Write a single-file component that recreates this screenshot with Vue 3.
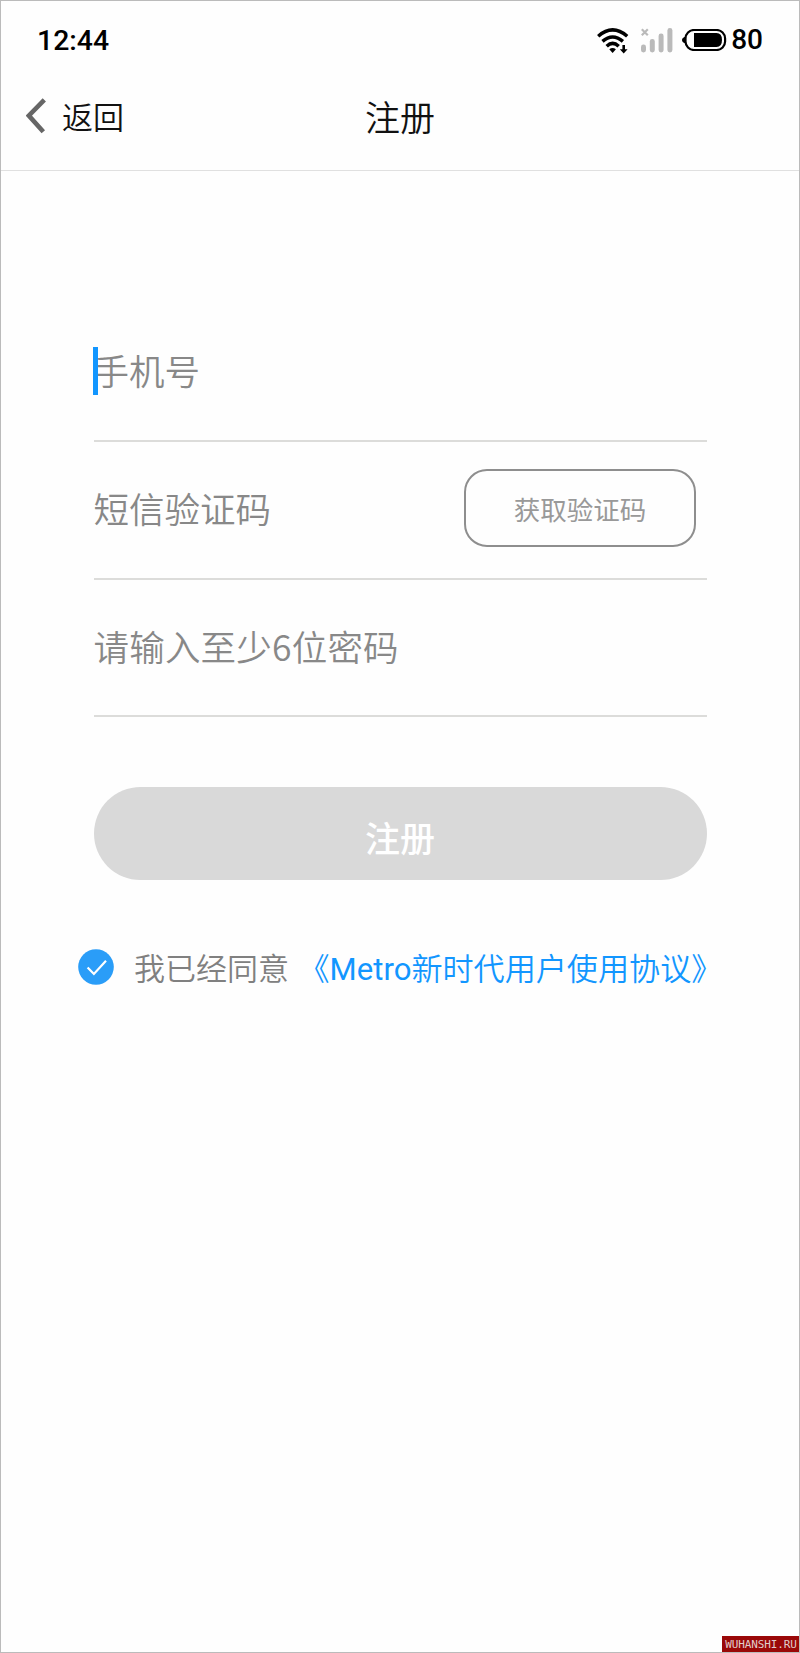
<script setup>
import { reactive, ref } from 'vue'
const form = reactive({
    phone: '',
    code: '',
    password: ''
})
const agreed = ref(true)
const bars = [
    { x: 0, h: 8 },
    { x: 8.8, h: 13.5 },
    { x: 17.6, h: 19 },
    { x: 26.4, h: 24.5 }
]
</script>
<template>
    <div class="page">
        <div class="status">
            <span class="time">12:44</span>
            <div class="status-icons">
                <svg class="wifi" width="32" height="27" viewBox="0 0 32 27">
                    <g fill="none" stroke="#000" stroke-width="3.5">
                        <path d="M1.2 9.2Q15.6-3.4 30.2 9.2" />
                        <path d="M5.5 14.4Q15.6 5.6 25.9 14.4" />
                        <path d="M9.7 19.2Q15.6 13.6 21.7 19.2" />
                    </g>
                    <path d="M12.3 22.3Q15.6 19.6 18.9 22.3L15.6 26Z" />
                    <path d="M25.4 18h2.6v4.2h2.6L26.7 26.4 22.8 22.2h2.6Z" />
                </svg>
                <svg class="signal" width="32" height="25" viewBox="0 0 32 25">
                    <rect v-for="bar in bars" :key="bar.x" :x="bar.x" :y="24.5 - bar.h" width="5" :height="bar.h" rx="2.4" fill="#bababa" />
                    <path d="M.8 1.2 6.8 7.2M6.8 1.2.8 7.2" stroke="#bababa" stroke-width="2.2" />
                </svg>
                <svg class="battery" width="45" height="22" viewBox="0 0 45 22">
                    <path d="M4 7.5Q0 8.5 0 11T4 14.5Z" />
                    <rect x="3.5" y="1" width="39.6" height="20" rx="8.5" fill="none" stroke="#000" stroke-width="2.2" />
                    <path d="M12 4H34.5Q40 4 40 11T34.5 18H12Z" />
                </svg>
                <span class="percent">80</span>
            </div>
        </div>
        <header class="nav">
            <div class="back">
                <svg width="20" height="36" viewBox="0 0 20 36">
                    <path d="M18.3 1.8 2.8 17.6 17.3 33.8" fill="none" stroke="#666" stroke-width="4.6" />
                </svg>
                <span>返回</span>
            </div>
            <h1>注册</h1>
            <div class="nav-right"></div>
        </header>
        <main class="content">
            <div class="field">
                <i class="caret"></i>
                <input v-model="form.phone" type="text" placeholder="手机号">
            </div>
            <div class="field">
                <input v-model="form.code" type="text" placeholder="短信验证码">
                <button class="get-code">获取验证码</button>
            </div>
            <div class="field">
                <input v-model="form.password" class="password" type="password" placeholder="请输入至少6位密码">
            </div>
            <button class="submit">注册</button>
            <div class="agree" @click="agreed = !agreed">
                <svg width="36" height="36" viewBox="0 0 36 36">
                    <circle cx="18" cy="18" r="17.8" fill="#2a9df8" />
                    <path v-if="agreed" d="M9.6 18.4 15.9 25 28 11.8" fill="none" stroke="#fff" stroke-width="2.2" />
                </svg>
                <span class="agree-text">我已经同意</span>
                <a class="link">《<span class="latin">Metro</span>新时代用户使用协议》</a>
            </div>
        </main>
        <div class="mark">WUHANSHI.RU</div>
    </div>
</template>
<style>
body {
    margin: 0;
    background: #fefefe;
}
</style>
<style scoped>
.page {
    position: relative;
    box-sizing: border-box;
    width: 800px;
    height: 1653px;
    border: 1px solid #bbb;
    overflow: hidden;
    background: #fefefe;
    font-family: Roboto, "Noto Sans CJK SC", sans-serif;
    font-weight: 350;
    color: #111;
}

.status {
    display: flex;
    justify-content: space-between;
    align-items: center;
    height: 77px;
    padding: 0 36px 0 36px;
    color: #000;
}

.time {
    margin-top: 2px;
    font-size: 28.4px;
    font-weight: 500;
}

.status-icons {
    display: flex;
    align-items: center;
    padding-top: 1px;
}

.signal {
    margin-left: 12px;
}

.battery {
    margin-left: 9px;
}

.percent {
    margin: -1px 0 0 4px;
    font-size: 28px;
    font-weight: 500;
}

.nav {
    display: flex;
    align-items: center;
    height: 93px;
    box-sizing: border-box;
    border-bottom: 1px solid #e0e0e0;
}

.back {
    display: flex;
    align-items: center;
    width: 200px;
    margin-top: -17px;
    padding-left: 25px;
    box-sizing: border-box;
    font-size: 31px;
}

.back span {
    margin: 0 0 0 16px;
}

h1 {
    flex: 1;
    margin: -18px 0 0;
    font-size: 35px;
    font-weight: 350;
    text-align: center;
}

.nav-right {
    width: 200px;
}

.content {
    padding: 133px 92.5px 0;
}

.field {
    position: relative;
    display: flex;
    align-items: center;
    height: 137.8px;
    box-sizing: border-box;
    border-bottom: 2px solid #dcdcda;
}

.caret {
    position: absolute;
    left: -0.5px;
    top: 42.5px;
    width: 5px;
    height: 48px;
    background: #1296ff;
}

input {
    flex: 1;
    min-width: 0;
    height: 60px;
    padding: 2px 0 0;
    border: 0;
    outline: 0;
    background: none;
    box-sizing: border-box;
    font-family: inherit;
    font-size: 35.5px;
    font-weight: 350;
}

input::placeholder {
    color: #888;
    opacity: 1;
}

.password {
    padding: 0 0 4px;
    font-family: "Noto Sans CJK SC", sans-serif;
    letter-spacing: 0.2px;
}

.get-code {
    width: 232px;
    height: 78px;
    margin: -3px 10.5px 0 0;
    padding: 1px 0 0;
    border: 2px solid #8e8e8e;
    border-radius: 23px;
    background: none;
    font-family: inherit;
    font-size: 26.5px;
    color: #999;
}

.submit {
    display: block;
    width: 100%;
    height: 93px;
    margin-top: 69.5px;
    padding: 6px 0 0;
    border: 0;
    border-radius: 47px;
    background: #d9d9d9;
    font-family: inherit;
    font-size: 35px;
    font-weight: 500;
    color: #fff;
}

.agree {
    display: flex;
    align-items: center;
    height: 46px;
    margin: 64px -20px 0 -15.5px;
    font-size: 31px;
    white-space: nowrap;
}

.agree-text {
    margin: -1px 0 0 20px;
    color: #808080;
}

.link {
    margin: -1px 0 0 9.5px;
    font-size: 31.1px;
    color: #1296ff;
}

.latin {
    font-weight: 400;
}

.mark {
    position: absolute;
    right: -1px;
    bottom: -1px;
    width: 78px;
    height: 17px;
    background: #9a0808;
    font-family: "DejaVu Sans Mono", monospace;
    font-size: 11px;
    line-height: 18px;
    letter-spacing: -0.1px;
    text-align: center;
    color: #e0cccc;
}
</style>
